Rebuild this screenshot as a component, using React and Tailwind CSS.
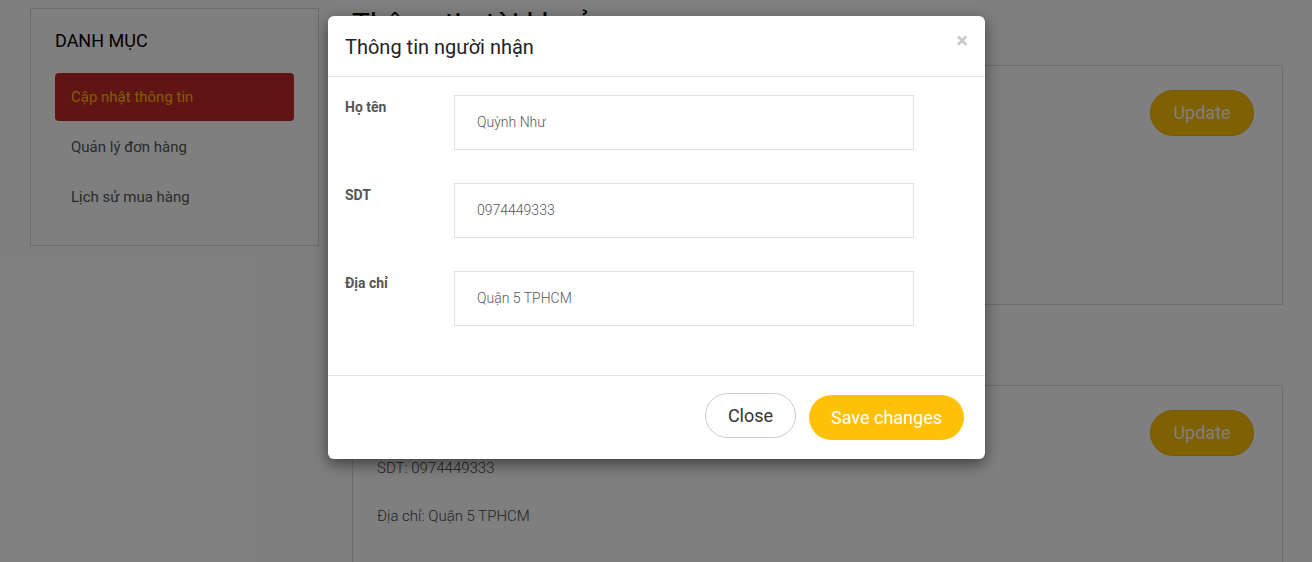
import React from 'react';

const menu = ['Cập nhật thông tin', 'Quản lý đơn hàng', 'Lịch sử mua hàng'];

const fields = [
  { label: 'Họ tên', value: 'Quỳnh Như' },
  { label: 'SDT', value: '0974449333' },
  { label: 'Địa chỉ', value: 'Quận 5 TPHCM' }
];

const InfoCard = ({ lines, className }) => (
  <div className={`border border-[#d9d9d9] flex justify-between pl-6 pr-7 pt-[24px] ${className}`}>
    <div className="flex flex-col gap-[28px] text-[15px] font-light text-[#444]">
      {lines.map((l) => (
        <p key={l} className="leading-[20px]">{l}</p>
      ))}
    </div>
    <button className="h-[46px] w-[104px] rounded-full bg-[#ffc107] border border-[#f0b000] text-white text-[18px] leading-[22px]">
      Update
    </button>
  </div>
);

const App = () => {
  return (
    <div className="relative h-[562px] overflow-hidden bg-white font-['Roboto',sans-serif]">
      {/* page below the dialog */}
      <div className="flex gap-[33px] pl-[30px] pr-[29px] pt-2">
        <aside className="w-[289px] h-[238px] shrink-0 border border-[#d9d9d9] px-6 pt-[21px]">
          <h3 className="text-[18px] leading-[22px] text-black">DANH MỤC</h3>
          <ul className="mt-[21px] flex flex-col gap-[2px]">
            {menu.map((m, i) => (
              <li
                key={m}
                className={`h-[48px] flex items-center px-4 rounded text-[15px] ${
                  i === 0 ? 'bg-[#c12828] text-[#ffc107]' : 'text-[#555]'
                }`}
              >
                {m}
              </li>
            ))}
          </ul>
        </aside>
        <main className="flex-1 -mt-[2px]">
          <h1 className="text-[30px] leading-[36px] text-black">Thông tin tài khoản</h1>
          <InfoCard
            className="mt-[23px] h-[240px]"
            lines={['Họ tên: Quỳnh Như', 'SDT: 0974449333', 'Địa chỉ: Quận 5 TPHCM']}
          />
          <h2 className="mt-[22px] text-[24px] leading-[36px] text-black">Thông tin người nhận</h2>
          <InfoCard
            className="mt-[22px] h-[240px]"
            lines={['Họ tên: Quỳnh Như', 'SDT: 0974449333', 'Địa chỉ: Quận 5 TPHCM']}
          />
        </main>
      </div>

      {/* backdrop */}
      <div className="absolute inset-0 bg-black/50" />

      {/* dialog */}
      <div className="absolute inset-x-0 top-4 flex justify-center pl-px">
        <div className="w-[657px] bg-white rounded-[6px] shadow-[0_5px_15px_rgba(0,0,0,0.5)]">
          <div className="h-[61px] flex items-center justify-between pl-[17px] pr-[17px] border-b border-[#e5e5e5]">
            <h4 className="text-[20px] text-[#222] leading-[24px] pt-[1px]">Thông tin người nhận</h4>
            <span className="text-[22px] font-bold text-[#c8c8c8] leading-none -mt-[11px]">×</span>
          </div>
          <div className="pl-[17px] pt-[18px] pb-[49px] flex flex-col gap-[33px] border-b border-[#e5e5e5]">
            {fields.map((f) => (
              <div key={f.label} className="flex">
                <label className="w-[109px] pt-[2px] text-[14px] font-bold text-[#555] leading-[20px]">
                  {f.label}
                </label>
                <div className="w-[460px] h-[55px] border border-[#e0e0e0] flex items-center pl-[22px] text-[14px] font-light text-[#555]">
                  {f.value}
                </div>
              </div>
            ))}
          </div>
          <div className="h-[83px] flex items-start justify-end gap-[13px] pr-[21px] pt-[17px]">
            <button className="h-[45px] w-[91px] rounded-full border border-[#ccc] text-[18px] text-[#333] bg-white">
              Close
            </button>
            <button className="mt-[2px] h-[45px] w-[155px] rounded-full bg-[#ffc107] text-[18px] text-white">
              Save changes
            </button>
          </div>
        </div>
      </div>
    </div>
  );
};

export default App;
